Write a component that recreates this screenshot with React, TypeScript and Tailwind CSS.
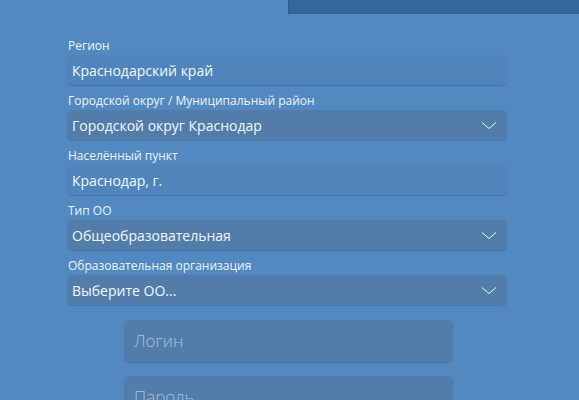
type Field = { label: string; value: string; select?: boolean };

const fields: Field[] = [
  { label: "Регион", value: "Краснодарский край" },
  { label: "Городской округ / Муниципальный район", value: "Городской округ Краснодар", select: true },
  { label: "Населённый пункт", value: "Краснодар, г." },
  { label: "Тип ОО", value: "Общеобразовательная", select: true },
  { label: "Образовательная организация", value: "Выберите ОО...", select: true },
];

function Chevron() {
  return (
    <svg width="16" height="9" viewBox="0 0 16 9" className="mr-[5px] mt-[1px]">
      <path d="M1 1.5 L8 7.5 L15 1.5" fill="none" stroke="#eef4fb" strokeWidth="1" />
    </svg>
  );
}

export default function App() {
  return (
    <div className="w-[579px] h-[400px] overflow-hidden bg-[#5289c0] font-['Open_Sans',sans-serif] text-white">
      <div className="flex justify-end">
        <div className="w-[291px] h-[14px] bg-[#35679c] border-b border-l border-[#2f5f92]" />
      </div>
      <div className="pl-[67px] pr-[72px] pt-[22px] flex flex-col">
        {fields.map((f, i) => (
          <div key={i} className="flex flex-col">
            <label className="h-[19px] pl-px text-[12px] leading-[19px] text-[#eef4fb]">{f.label}</label>
            <div
              className={
                "h-[30px] mb-[6px] rounded-[5px] flex items-center justify-between px-[5px] text-[14px] shadow-[0_1px_1px_rgba(40,80,130,0.35)] " +
                (f.select ? "bg-[#527daa]" : "bg-[#4f85bb]")
              }
            >
              <span className="text-[#f4f8fc]">{f.value}</span>
              {f.select && <Chevron />}
            </div>
          </div>
        ))}
      </div>
      <div className="pl-[124px] pr-[126px] pt-[9px] flex flex-col gap-[14px]">
        <div className="h-[42px] rounded-[5px] bg-[#527caa] flex items-center px-[10px] text-[17px] font-light text-[#a9c2dc] shadow-[0_1px_1px_rgba(40,80,130,0.35)]">
          Логин
        </div>
        <div className="h-[42px] rounded-[5px] bg-[#527caa] flex items-center px-[10px] text-[17px] font-light text-[#a9c2dc] shadow-[0_1px_1px_rgba(40,80,130,0.35)]">
          Пароль
        </div>
      </div>
    </div>
  );
}
